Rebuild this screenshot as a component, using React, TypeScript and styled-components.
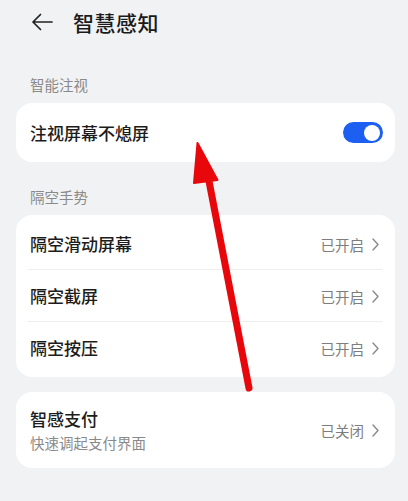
import React, { useState } from 'react';
import styled, { createGlobalStyle } from 'styled-components';

const GlobalStyle = createGlobalStyle`
  html, body {
    margin: 0;
    padding: 0;
    background: #f1f2f4;
  }
  body {
    font-family: "Noto Sans CJK SC", "Noto Sans", sans-serif;
    -webkit-font-smoothing: antialiased;
  }
`;

const Page = styled.div`
  position: relative;
  width: 408px;
  min-height: 501px;
  padding: 0 13px 0 16px;
  box-sizing: border-box;
  background: #f1f2f4;
`;

const Header = styled.div`
  height: 44px;
  display: flex;
  align-items: center;
  gap: 19px;
  padding-left: 14px;
`;

const BackButton = styled.button`
  width: 24px;
  height: 24px;
  padding: 0;
  border: none;
  background: none;
  display: flex;
  align-items: center;
  justify-content: center;
  color: #222;
`;

const Title = styled.h1`
  margin: 0;
  font-size: 21px;
  font-weight: 500;
  color: #1b1b1b;
  letter-spacing: 0.5px;
`;

const SectionLabel = styled.div<{ $top: number }>`
  padding: ${(p) => p.$top}px 0 0 14px;
  margin-bottom: 8px;
  font-size: 14.5px;
  line-height: 20px;
  color: #8a8a8a;
`;

const Card = styled.div<{ $padY?: number }>`
  background: #fff;
  border-radius: 16px;
  padding: ${(p) => p.$padY ?? 0}px 0;
`;

const Row = styled.div<{ $height: number; $divider?: boolean }>`
  position: relative;
  height: ${(p) => p.$height}px;
  display: flex;
  align-items: center;
  padding: 0 16px 0 14px;

  ${(p) =>
    p.$divider &&
    `
    &::after {
      content: "";
      position: absolute;
      left: 12px;
      right: 12px;
      bottom: 0;
      height: 1px;
      background: #eeeeef;
    }
  `}
`;

const RowText = styled.div`
  flex: 1;
  display: flex;
  flex-direction: column;
  gap: 3px;
`;

const RowTitle = styled.div`
  font-size: 17px;
  line-height: 22px;
  font-weight: 500;
  color: #1c1c1c;
`;

const RowSub = styled.div`
  font-size: 14.5px;
  line-height: 19px;
  color: #8a8a8a;
`;

const Value = styled.div`
  display: flex;
  align-items: center;
  gap: 8px;
  font-size: 14.5px;
  color: #7d7d7d;
`;

const Track = styled.button<{ $on: boolean }>`
  position: relative;
  width: 40px;
  height: 21px;
  margin-right: -4px;
  padding: 0;
  border: none;
  border-radius: 11px;
  background: ${(p) => (p.$on ? '#1c5ff1' : '#d5d5d8')};
`;

const Knob = styled.span<{ $on: boolean }>`
  position: absolute;
  top: 2.5px;
  left: ${(p) => (p.$on ? '21px' : '2.5px')};
  width: 16px;
  height: 16px;
  border-radius: 50%;
  background: #fff;
`;

const Pointer = styled.svg`
  position: absolute;
  left: 0;
  top: 0;
  pointer-events: none;
`;

const Chevron = () => (
  <svg width="7" height="13" viewBox="0 0 7 13">
    <path d="M1 1l5 5.5L1 12" fill="none" stroke="#8a8a8a" strokeWidth="1.4" strokeLinecap="round" strokeLinejoin="round" />
  </svg>
);

const gestures = ['隔空滑动屏幕', '隔空截屏', '隔空按压'];

export default function App() {
  const [gaze, setGaze] = useState(true);

  return (
    <Page>
      <GlobalStyle />
      <Header>
        <BackButton aria-label="返回">
          <svg width="22" height="18" viewBox="0 0 22 18">
            <path d="M21 9H2M9.5 1.5L2 9l7.5 7.5" fill="none" stroke="#222" strokeWidth="1.7" strokeLinecap="round" strokeLinejoin="round" />
          </svg>
        </BackButton>
        <Title>智慧感知</Title>
      </Header>

      <SectionLabel $top={31}>智能注视</SectionLabel>
      <Card>
        <Row $height={59}>
          <RowText>
            <RowTitle>注视屏幕不熄屏</RowTitle>
          </RowText>
          <Track $on={gaze} onClick={() => setGaze(!gaze)}>
            <Knob $on={gaze} />
          </Track>
        </Row>
      </Card>

      <SectionLabel $top={25}>隔空手势</SectionLabel>
      <Card $padY={3}>
        {gestures.map((name, i) => (
          <Row key={name} $height={52} $divider={i < gestures.length - 1}>
            <RowText>
              <RowTitle>{name}</RowTitle>
            </RowText>
            <Value>
              已开启
              <Chevron />
            </Value>
          </Row>
        ))}
      </Card>

      <Card style={{ marginTop: 15 }}>
        <Row $height={76}>
          <RowText>
            <RowTitle>智感支付</RowTitle>
            <RowSub>快速调起支付界面</RowSub>
          </RowText>
          <Value>
            已关闭
            <Chevron />
          </Value>
        </Row>
      </Card>

      {/* red pointer drawn on top of the list */}
      <Pointer width="408" height="501" viewBox="0 0 408 501">
        <path d="M249 388L208 176" stroke="#e8080c" strokeWidth="7" strokeLinecap="round" />
        <path d="M197.5 143L194 183L217.5 180Z" fill="#e8080c" stroke="#e8080c" strokeWidth="2" strokeLinejoin="round" />
      </Pointer>
    </Page>
  );
}
